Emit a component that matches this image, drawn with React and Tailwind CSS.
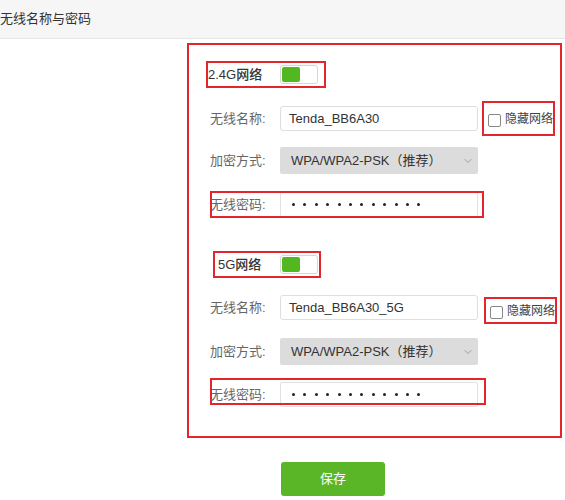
import { ChevronDown } from 'lucide-react';

const FONT = { fontFamily: '"Liberation Sans", "Noto Sans CJK SC", sans-serif' };

function Toggle() {
  return (
    <div className="w-[38px] h-[19px] border border-[#d6d6d6] rounded-[3px] p-[1px] bg-white flex">
      <div className="w-[18px] h-full bg-[#52b81f] rounded-[2px]" />
    </div>
  );
}

function Label({ children }) {
  return <div className="w-[70px] pl-[21px] box-content text-[13px] text-[#666] shrink-0">{children}</div>;
}

function Dots() {
  return (
    <div className="flex items-center gap-[8.4px] pl-[11px]">
      {Array.from({ length: 12 }).map((_, i) => (
        <span key={i} className="w-[3px] h-[3px] rounded-full bg-[#222]" />
      ))}
    </div>
  );
}

function Section({ title, titleLeft, titleBoxLeft, titleBoxRight, ssid, first }) {
  return (
    <>
      {/* title row */}
      <div className={`relative h-[27px] flex items-center ${first ? 'mt-[16px]' : 'mt-[34px]'}`}>
        <div className="absolute top-0 bottom-0 border-2 border-[#e3262d]" style={{ left: titleBoxLeft, right: titleBoxRight }} />
        <div className="w-[91px] text-[13px] font-medium text-[#333]" style={{ paddingLeft: titleLeft }}>{title}</div>
        <Toggle />
      </div>

      {/* ssid */}
      <div className={`relative flex items-center ${first ? 'mt-[13px] h-[35px]' : 'mt-[17px] h-[25px]'}`}>
        <Label>无线名称:</Label>
        <div className="w-[198px] h-[25px] border border-[#dedede] rounded-[3px] bg-white flex items-center pl-[8px] text-[13px] text-[#333]">
          {ssid}
        </div>
        <div className={`absolute left-[293px] w-[73px] border-2 border-[#e3262d] flex items-center pl-[4px] gap-[4px] ${first ? 'top-0 h-[35px]' : 'top-[2px] h-[27px] left-[295px] w-[69px]'}`}>
          <span className="w-[13px] h-[13px] border border-[#888] rounded-[2px] bg-white shrink-0 mt-[4px]" />
          <span className="text-[12px] text-[#444] whitespace-nowrap">隐藏网络</span>
        </div>
      </div>

      {/* security */}
      <div className={`flex items-center h-[27px] ${first ? 'mt-[11px]' : 'mt-[18px]'}`}>
        <Label>加密方式:</Label>
        <div className="w-[198px] h-[27px] bg-[#dcdcdc] rounded-[2px] flex items-center justify-between pl-[11px] pr-[4px] text-[13px] text-[#333]">
          <span>WPA/WPA2-PSK（推荐）</span>
          <ChevronDown size={12} color="#888" strokeWidth={1.5} />
        </div>
      </div>

      {/* password */}
      <div className={`relative flex items-center h-[25px] ${first ? 'mt-[18px]' : 'mt-[17px]'}`}>
        <div className={`absolute left-[21px] w-[274px] h-[27px] border-2 border-[#e3262d] ${first ? '-top-[1px]' : '-top-[4px] w-[276px]'}`} />
        <Label>无线密码:</Label>
        <div className="w-[198px] h-[25px] border border-[#e2e2e2] rounded-[2px] bg-white flex items-center">
          <Dots />
        </div>
      </div>
    </>
  );
}

export default function App() {
  return (
    <div className="w-[565px] h-[500px] bg-white overflow-hidden" style={FONT}>
      <div className="h-[39px] bg-[#f6f6f6] border-b border-[#e6e6e6] flex items-center text-[13px] text-[#333]">
        无线名称与密码
      </div>

      <div className="ml-[187px] mt-[4px] w-[375px] h-[395px] border-2 border-[#e3262d] flex flex-col">
        <Section title="2.4G网络" titleLeft={19} titleBoxLeft={17} titleBoxRight={234} ssid="Tenda_BB6A30" first />
        <Section title="5G网络" titleLeft={29} titleBoxLeft={24} titleBoxRight={239} ssid="Tenda_BB6A30_5G" />
      </div>

      <div className="ml-[281px] mt-[24px] w-[104px] h-[34px] bg-[#5ab626] rounded-[3px] flex items-center justify-center text-[13px] text-white">
        保存
      </div>
    </div>
  );
}
